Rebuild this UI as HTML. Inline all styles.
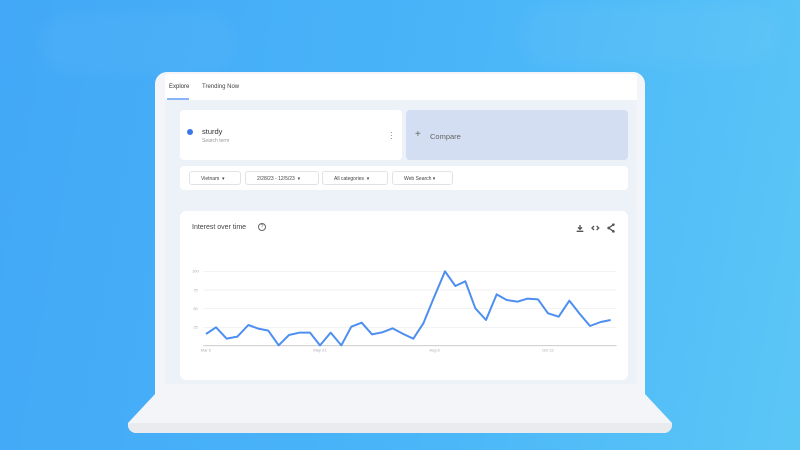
<!DOCTYPE html>
<html><head><meta charset="utf-8"><style>
*{margin:0;padding:0;box-sizing:border-box}
body{width:800px;height:450px;overflow:hidden;background:linear-gradient(100deg,#42a8f7 0%,#4ab5f8 55%,#5bc6f6 100%);font-family:"Liberation Sans",sans-serif;position:relative}
.abs{position:absolute}
</style></head><body>
<div class="abs" style="left:40px;top:14px;width:195px;height:60px;border-radius:40px;background:rgba(255,255,255,0.035);filter:blur(6px)"></div>
<div class="abs" style="left:520px;top:5px;width:260px;height:60px;border-radius:40px;background:rgba(255,255,255,0.035);filter:blur(6px)"></div>
<!-- lid -->
<div class="abs" style="left:155px;top:72px;width:490px;height:324px;background:#f3f5f8;border-radius:12px 12px 0 0"></div>
<div class="abs" style="left:165px;top:74px;width:472px;height:310px;background:#edf1f8;border-radius:4px;overflow:hidden">
  <div class="abs" style="left:0;top:0;width:472px;height:26px;background:#fff"></div>
  <div class="abs" style="left:4px;top:10px;font-size:6px;color:#333">Explore</div>
  <div class="abs" style="left:2px;top:24px;width:22px;height:2px;background:#8ab4f8"></div>
  <div class="abs" style="left:37px;top:10px;font-size:6px;color:#444">Trending Now</div>
</div>
<!-- search card -->
<div class="abs" style="left:180px;top:110px;width:222px;height:50px;background:#fff;border-radius:4px"></div>
<div class="abs" style="left:187px;top:129px;width:6px;height:6px;border-radius:50%;background:#3b78e7"></div>
<div class="abs" style="left:202px;top:127px;font-size:7.5px;color:#333">sturdy</div>
<div class="abs" style="left:202px;top:138px;font-size:5px;color:#999">Search term</div>
<div class="abs" style="left:390px;top:131px;font-size:8px;color:#666;line-height:3px">·<br>·<br>·</div>
<div class="abs" style="left:406px;top:110px;width:222px;height:50px;background:#d3def2;border-radius:4px"></div>
<div class="abs" style="left:415px;top:129px;font-size:10px;color:#666">+</div>
<div class="abs" style="left:430px;top:132px;font-size:7.5px;color:#666">Compare</div>
<!-- filters -->
<div class="abs" style="left:180px;top:166px;width:448px;height:24px;background:#fff;border-radius:4px"></div>
<div class="abs" style="left:189px;top:171px;width:52px;height:14px;border:1px solid #e2e2e2;border-radius:3px;font-size:5px;color:#444;padding:4px 0 0 11px">Vietnam &nbsp;▾</div>
<div class="abs" style="left:245px;top:171px;width:74px;height:14px;border:1px solid #e2e2e2;border-radius:3px;font-size:5px;color:#444;padding:4px 0 0 11px">2/28/23 - 12/5/23 &nbsp;▾</div>
<div class="abs" style="left:322px;top:171px;width:66px;height:14px;border:1px solid #e2e2e2;border-radius:3px;font-size:5px;color:#444;padding:4px 0 0 11px">All categories &nbsp;▾</div>
<div class="abs" style="left:392px;top:171px;width:61px;height:14px;border:1px solid #e2e2e2;border-radius:3px;font-size:5px;color:#444;padding:4px 0 0 11px">Web Search ▾</div>
<!-- chart card -->
<div class="abs" style="left:180px;top:211px;width:448px;height:169px;background:#fff;border-radius:6px"></div>
<div class="abs" style="left:192px;top:224px;font-size:7px;color:#444">Interest over time</div>
<div class="abs" style="left:258px;top:223px;width:8px;height:8px;border:1px solid #666;border-radius:50%;font-size:5px;color:#666;text-align:center;line-height:6px">?</div>
<svg class="abs" style="left:180px;top:210px" width="450" height="160" viewBox="0 0 1350 480">
 <g stroke="#ececec" stroke-width="2">
  <line x1="70" y1="184" x2="1310" y2="184"/><line x1="70" y1="240" x2="1310" y2="240"/>
  <line x1="70" y1="296" x2="1310" y2="296"/><line x1="70" y1="352" x2="1310" y2="352"/>
 </g>
 <line x1="70" y1="407" x2="1310" y2="407" stroke="#ccc" stroke-width="3"/>
 <g font-size="12" fill="#aaa" font-family="Liberation Sans">
  <text x="36" y="188">100</text><text x="40" y="244">75</text><text x="40" y="300">50</text><text x="40" y="356">25</text>
  <text x="62" y="424">Mar 5</text><text x="400" y="424">May 21</text><text x="748" y="424">Aug 6</text><text x="1086" y="424">Oct 22</text>
 </g>
 <polyline fill="none" stroke="#4d8ff0" stroke-width="6" stroke-linejoin="round" points="78,372 108,352 140,386 172,380 205,345 235,356 265,362 296,406 327,375 358,368 390,368 420,406 452,368 484,406 514,350 545,338 576,373 607,367 638,355 670,372 700,386 730,340 762,262 795,184 826,228 856,214 886,295 918,330 950,253 980,270 1012,275 1042,266 1074,268 1104,310 1136,320 1168,272 1198,310 1230,348 1262,336 1292,330"/>
 <g stroke="#555" stroke-width="4" fill="none">
  <path d="M1200 45v12M1194 52l6 6 6-6M1190 64h20"/>
  <path d="M1242 48l-6 6 6 6M1250 48l6 6-6 6"/>
  <path d="M1300 44l-14 10 14 10"/>
 </g>
 <g fill="#555"><circle cx="1300" cy="44" r="4"/><circle cx="1286" cy="54" r="4"/><circle cx="1300" cy="64" r="4"/></g>
</svg>
<!-- base -->
<div class="abs" style="left:128px;top:393px;width:544px;height:40px;background:#f4f5f8;clip-path:polygon(28px 0,516px 0,544px 30px,544px 40px,0 40px,0 30px);border-radius:0 0 8px 8px"></div>
<div class="abs" style="left:128px;top:423px;width:544px;height:10px;background:#e9ebef;border-radius:0 0 8px 8px"></div>
</body></html>
